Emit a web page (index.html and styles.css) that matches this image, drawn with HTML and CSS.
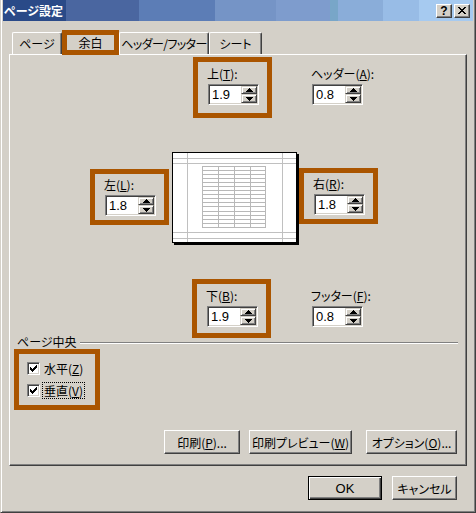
FILE: index.html
```html
<!DOCTYPE html>
<html lang="ja">
<head>
<meta charset="utf-8">
<title>ページ設定</title>
<link rel="stylesheet" href="styles.css">
</head>
<body>
<div class="window">
  <div class="titlebar">
    <span class="title">ページ設定</span>
    <div class="capbtns">
      <span class="capbtn help">?</span>
      <span class="capbtn close"><svg width="8" height="7" viewBox="0 0 8 7"><g fill="#000"><rect x="0" y="0" width="2" height="1"/><rect x="6" y="0" width="2" height="1"/><rect x="1" y="1" width="2" height="1"/><rect x="5" y="1" width="2" height="1"/><rect x="2" y="2" width="4" height="1"/><rect x="3" y="3" width="2" height="1"/><rect x="2" y="4" width="4" height="1"/><rect x="1" y="5" width="2" height="1"/><rect x="5" y="5" width="2" height="1"/><rect x="0" y="6" width="2" height="1"/><rect x="6" y="6" width="2" height="1"/></g></svg></span>
    </div>
  </div>
  <div class="main">
    <div class="tabs">
      <div class="tab t1">ページ</div>
      <div class="tab active">余白</div>
      <div class="tab t3">ヘッダー/フッター</div>
      <div class="tab t4">シート</div>
    </div>
    <div class="panel">
      <div class="row row-top">
        <div class="field hl">
          <div class="lbl">上(<u>T</u>):</div>
          <div class="spin"><span class="val">1.9</span><div class="arrows"><span class="sb up"><svg width="7" height="4" viewBox="0 0 7 4"><g fill="#000"><rect x="3" y="0" width="1" height="1"/><rect x="2" y="1" width="3" height="1"/><rect x="1" y="2" width="5" height="1"/><rect x="0" y="3" width="7" height="1"/></g></svg></span><span class="sb dn"><svg width="7" height="4" viewBox="0 0 7 4"><g fill="#000"><rect x="0" y="0" width="7" height="1"/><rect x="1" y="1" width="5" height="1"/><rect x="2" y="2" width="3" height="1"/><rect x="3" y="3" width="1" height="1"/></g></svg></span></div></div>
        </div>
        <div class="field side">
          <div class="lbl">ヘッダー(<u>A</u>):</div>
          <div class="spin"><span class="val">0.8</span><div class="arrows"><span class="sb up"><svg width="7" height="4" viewBox="0 0 7 4"><g fill="#000"><rect x="3" y="0" width="1" height="1"/><rect x="2" y="1" width="3" height="1"/><rect x="1" y="2" width="5" height="1"/><rect x="0" y="3" width="7" height="1"/></g></svg></span><span class="sb dn"><svg width="7" height="4" viewBox="0 0 7 4"><g fill="#000"><rect x="0" y="0" width="7" height="1"/><rect x="1" y="1" width="5" height="1"/><rect x="2" y="2" width="3" height="1"/><rect x="3" y="3" width="1" height="1"/></g></svg></span></div></div>
        </div>
      </div>

      <div class="row row-mid">
        <div class="field hl mid left">
          <div class="lbl">左(<u>L</u>):</div>
          <div class="spin"><span class="val">1.8</span><div class="arrows"><span class="sb up"><svg width="7" height="4" viewBox="0 0 7 4"><g fill="#000"><rect x="3" y="0" width="1" height="1"/><rect x="2" y="1" width="3" height="1"/><rect x="1" y="2" width="5" height="1"/><rect x="0" y="3" width="7" height="1"/></g></svg></span><span class="sb dn"><svg width="7" height="4" viewBox="0 0 7 4"><g fill="#000"><rect x="0" y="0" width="7" height="1"/><rect x="1" y="1" width="5" height="1"/><rect x="2" y="2" width="3" height="1"/><rect x="3" y="3" width="1" height="1"/></g></svg></span></div></div>
        </div>
        <div class="preview">
          <svg width="125" height="91" viewBox="0 0 125 91">
            <rect x="0.5" y="0.5" width="124" height="90" fill="#fff" stroke="#000"/>
            <g stroke="#c0c0c0" stroke-width="1">
              <line x1="15.5" y1="1" x2="15.5" y2="90"/>
              <line x1="110.5" y1="1" x2="110.5" y2="90"/>
              <line x1="1" y1="6.5" x2="124" y2="6.5"/>
              <line x1="1" y1="11.5" x2="124" y2="11.5"/>
              <line x1="1" y1="80.5" x2="124" y2="80.5"/>
              <line x1="1" y1="86.5" x2="124" y2="86.5"/>
            </g>
            <g stroke="#b8b8b8" stroke-width="1">
              <rect x="30.5" y="14.5" width="63" height="61" fill="none"/>
              <line x1="46.5" y1="14.5" x2="46.5" y2="75.5"/>
              <line x1="62.5" y1="14.5" x2="62.5" y2="75.5"/>
              <line x1="78.5" y1="14.5" x2="78.5" y2="75.5"/>
              <line x1="30.5" y1="18.5" x2="93.5" y2="18.5"/>
              <line x1="30.5" y1="22.5" x2="93.5" y2="22.5"/>
              <line x1="30.5" y1="26.5" x2="93.5" y2="26.5"/>
              <line x1="30.5" y1="30.5" x2="93.5" y2="30.5"/>
              <line x1="30.5" y1="34.5" x2="93.5" y2="34.5"/>
              <line x1="30.5" y1="38.5" x2="93.5" y2="38.5"/>
              <line x1="30.5" y1="42.5" x2="93.5" y2="42.5"/>
              <line x1="30.5" y1="46.5" x2="93.5" y2="46.5"/>
              <line x1="30.5" y1="50.5" x2="93.5" y2="50.5"/>
              <line x1="30.5" y1="54.5" x2="93.5" y2="54.5"/>
              <line x1="30.5" y1="59.5" x2="93.5" y2="59.5"/>
              <line x1="30.5" y1="63.5" x2="93.5" y2="63.5"/>
              <line x1="30.5" y1="67.5" x2="93.5" y2="67.5"/>
              <line x1="30.5" y1="71.5" x2="93.5" y2="71.5"/>
            </g>
          </svg>
        </div>
        <div class="field hl mid right">
          <div class="lbl">右(<u>R</u>):</div>
          <div class="spin"><span class="val">1.8</span><div class="arrows"><span class="sb up"><svg width="7" height="4" viewBox="0 0 7 4"><g fill="#000"><rect x="3" y="0" width="1" height="1"/><rect x="2" y="1" width="3" height="1"/><rect x="1" y="2" width="5" height="1"/><rect x="0" y="3" width="7" height="1"/></g></svg></span><span class="sb dn"><svg width="7" height="4" viewBox="0 0 7 4"><g fill="#000"><rect x="0" y="0" width="7" height="1"/><rect x="1" y="1" width="5" height="1"/><rect x="2" y="2" width="3" height="1"/><rect x="3" y="3" width="1" height="1"/></g></svg></span></div></div>
        </div>
      </div>

      <div class="row row-bot">
        <div class="field hl bot">
          <div class="lbl">下(<u>B</u>):</div>
          <div class="spin"><span class="val">1.9</span><div class="arrows"><span class="sb up"><svg width="7" height="4" viewBox="0 0 7 4"><g fill="#000"><rect x="3" y="0" width="1" height="1"/><rect x="2" y="1" width="3" height="1"/><rect x="1" y="2" width="5" height="1"/><rect x="0" y="3" width="7" height="1"/></g></svg></span><span class="sb dn"><svg width="7" height="4" viewBox="0 0 7 4"><g fill="#000"><rect x="0" y="0" width="7" height="1"/><rect x="1" y="1" width="5" height="1"/><rect x="2" y="2" width="3" height="1"/><rect x="3" y="3" width="1" height="1"/></g></svg></span></div></div>
        </div>
        <div class="field side bot">
          <div class="lbl">フッター(<u>F</u>):</div>
          <div class="spin"><span class="val">0.8</span><div class="arrows"><span class="sb up"><svg width="7" height="4" viewBox="0 0 7 4"><g fill="#000"><rect x="3" y="0" width="1" height="1"/><rect x="2" y="1" width="3" height="1"/><rect x="1" y="2" width="5" height="1"/><rect x="0" y="3" width="7" height="1"/></g></svg></span><span class="sb dn"><svg width="7" height="4" viewBox="0 0 7 4"><g fill="#000"><rect x="0" y="0" width="7" height="1"/><rect x="1" y="1" width="5" height="1"/><rect x="2" y="2" width="3" height="1"/><rect x="3" y="3" width="1" height="1"/></g></svg></span></div></div>
        </div>
      </div>

      <div class="group-head">
        <span class="group-label">ページ中央</span>
        <span class="etch"></span>
      </div>
      <div class="checks">
        <div class="chk">
          <span class="cb"><svg width="7" height="7" viewBox="0 0 7 7"><g fill="#000"><rect x="0" y="2" width="1" height="3"/><rect x="1" y="3" width="1" height="3"/><rect x="2" y="4" width="1" height="3"/><rect x="3" y="3" width="1" height="3"/><rect x="4" y="2" width="1" height="3"/><rect x="5" y="1" width="1" height="3"/><rect x="6" y="0" width="1" height="3"/></g></svg></span>
          <span class="chk-text">水平(<u>Z</u>)</span>
        </div>
        <div class="chk">
          <span class="cb"><svg width="7" height="7" viewBox="0 0 7 7"><g fill="#000"><rect x="0" y="2" width="1" height="3"/><rect x="1" y="3" width="1" height="3"/><rect x="2" y="4" width="1" height="3"/><rect x="3" y="3" width="1" height="3"/><rect x="4" y="2" width="1" height="3"/><rect x="5" y="1" width="1" height="3"/><rect x="6" y="0" width="1" height="3"/></g></svg></span>
          <span class="chk-text focus">垂直(<u>V</u>)</span>
        </div>
      </div>

      <div class="btnrow">
        <span class="btn b-print">印刷(<u>P</u>)...</span>
        <span class="btn b-prev">印刷プレビュー(<u>W</u>)</span>
        <span class="btn b-opt">オプション(<u>O</u>)...</span>
      </div>
    </div>
    <div class="footer">
      <span class="btn b-ok">OK</span>
      <span class="btn b-cancel">キャンセル</span>
    </div>
  </div>
</div>
</body>
</html>
```

FILE: styles.css
```css
* { box-sizing: border-box; }
html, body {
  margin: 0;
  padding: 0;
  background: #d4d0c8;
}
body {
  font-family: "Noto Sans CJK JP", "Liberation Sans", sans-serif;
  font-size: 12px;
  color: #000;
  font-feature-settings: "palt";
}
u { text-decoration: underline; text-underline-offset: 1px; }

.window {
  width: 476px;
  height: 513px;
  background: #d4d0c8;
  border-style: solid;
  border-width: 0 1px 1px 1px;
  border-color: #d4d0c8 #404040 #404040 #d4d0c8;
  box-shadow: inset 1px 0 #fff, inset -1px -1px #808080;
  padding: 0 2px 0 2px;
  overflow: hidden;
}

.titlebar {
  height: 21px;
  display: flex;
  align-items: center;
  justify-content: space-between;
  padding-left: 1px;
  background: linear-gradient(to right,
    #2a4a88 0, #2a4a88 63px,
    #4a66a0 63px, #4a66a0 136px,
    #5c7db6 136px, #5c7db6 212px,
    #7594c6 212px, #7594c6 273px,
    #7e9ccd 273px, #7e9ccd 327px,
    #78a6c8 327px, #78a6c8 335px,
    #8aadd9 335px, #8aadd9 380px,
    #98bce6 380px, #98bce6 416px,
    #a6caf0 416px, #a6caf0 100%);
}
.title {
  color: #fff;
  font-weight: bold;
  font-size: 12px;
  line-height: 14px;
}
.capbtns {
  display: flex;
  gap: 2px;
  margin-right: 3px;
}
.capbtn {
  width: 16px;
  height: 14px;
  background: #d4d0c8;
  border: 1px solid;
  border-color: #fff #404040 #404040 #fff;
  box-shadow: inset -1px -1px #808080;
  display: flex;
  align-items: center;
  justify-content: center;
}
.capbtn.help {
  font-family: "Liberation Sans", sans-serif;
  font-weight: bold;
  font-size: 12px;
  line-height: 12px;
}

.main {
  padding: 0 6px;
}

.tabs {
  margin-top: 9px;
  height: 24px;
  padding-left: 3px;
  display: flex;
  align-items: flex-end;
}
.tab {
  height: 22px;
  border: 1px solid;
  border-bottom: none;
  border-color: #fff #404040 transparent #fff;
  box-shadow: inset -1px 0 #808080;
  border-radius: 2px 2px 0 0;
  display: flex;
  align-items: center;
  justify-content: center;
  white-space: nowrap;
}
.tab.t1 { width: 50px; }
.tab.t3 { width: 90px; letter-spacing: -0.6px; }
.tab.t4 { width: 53px; }
.tab.active {
  width: 57px;
  height: 25px;
  margin-bottom: -1px;
  border: 5px solid #aa5500;
  border-radius: 0;
  box-shadow: none;
  background: #d4d0c8;
  position: relative;
  z-index: 1;
}

.panel {
  height: 412px;
  border: 1px solid;
  border-color: #fff #404040 #404040 #fff;
  box-shadow: inset -1px -1px #808080;
}

.row { display: flex; align-items: flex-start; }
.row-top { margin-top: 2px; padding-left: 183px; }
.row-mid { margin-top: 34px; padding-left: 80px; }
.row-bot { margin-top: 36px; padding-left: 182px; }

.field {
  width: 79px;
  border: 5px solid transparent;
  padding: 4px 8px 8px 10px;
}
.field.hl { border-color: #aa5500; }
.field.side { margin-left: 25px; }
.row-bot .field.side { margin-left: 26px; }
.field.bot { padding-bottom: 6px; }
.field.mid { padding-top: 3px; padding-bottom: 4px; }
.field.left { margin-top: 17px; }
.field.right { margin-top: 16px; margin-left: 2px; }
.lbl {
  height: 16px;
  line-height: 16px;
  margin-bottom: 2px;
  white-space: nowrap;
  margin-left: -1px;
}

.spin {
  width: 51px;
  height: 21px;
  background: #fff;
  border: 1px solid;
  border-color: #808080 #fff #fff #808080;
  box-shadow: inset 1px 1px #404040, inset -1px -1px #d4d0c8;
  padding: 1px;
  display: flex;
}
.val {
  flex: 1;
  font-family: "Liberation Sans", sans-serif;
  font-size: 13px;
  line-height: 17px;
  padding-left: 2px;
}
.arrows {
  width: 16px;
  display: flex;
  flex-direction: column;
}
.sb {
  background: #d4d0c8;
  border: 1px solid;
  border-color: #d4d0c8 #404040 #404040 #d4d0c8;
  box-shadow: inset 1px 1px #fff, inset -1px -1px #808080;
  display: flex;
  align-items: center;
  justify-content: center;
}
.sb.up { height: 8px; }
.sb.dn { height: 9px; }
.sb svg { display: block; }

.preview {
  width: 125px;
  height: 91px;
  margin-left: 3px;
  box-shadow: 2px 2px 0 #000;
}
.preview svg { display: block; }

.group-head {
  margin-top: -3px;
  height: 14px;
  padding-left: 7px;
  display: flex;
  align-items: center;
}
.group-label { line-height: 14px; white-space: nowrap; }
.etch {
  flex: 1;
  height: 2px;
  margin: 1px 8px 0 3px;
  border-top: 1px solid #808080;
  border-bottom: 1px solid #fff;
}

.checks {
  width: 86px;
  margin-left: 4px;
  border: 5px solid #aa5500;
  padding: 3px 0 4px 8px;
}
.chk {
  height: 22px;
  display: flex;
  align-items: center;
}
.cb {
  width: 13px;
  height: 13px;
  background: #fff;
  border: 1px solid;
  border-color: #808080 #fff #fff #808080;
  box-shadow: inset 1px 1px #404040, inset -1px -1px #d4d0c8;
  display: flex;
  align-items: center;
  justify-content: center;
}
.cb svg { display: block; }
.chk-text {
  margin-left: 2px;
  padding: 0 1px;
  border: 1px dotted transparent;
  line-height: 15px;
  white-space: nowrap;
}
.chk-text.focus { border-color: #000; }

.btnrow {
  margin-top: 20px;
  display: flex;
  justify-content: flex-end;
  padding-right: 9px;
}
.btn {
  height: 24px;
  border: 1px solid;
  border-color: #fff #404040 #404040 #fff;
  box-shadow: inset -1px -1px #808080;
  display: flex;
  align-items: center;
  justify-content: center;
  white-space: nowrap;
  background: #d4d0c8;
}
.b-print { width: 76px; }
.b-prev { width: 103px; margin-left: 9px; }
.b-opt { width: 91px; margin-left: 14px; }

.footer {
  margin-top: 10px;
  display: flex;
  justify-content: flex-end;
  padding-right: 10px;
}
.b-ok {
  width: 74px;
  border-color: #000;
  box-shadow: inset 1px 1px #fff, inset -1px -1px #404040, inset -2px -2px #808080;
  font-family: "Liberation Sans", sans-serif;
  font-size: 13px;
}
.b-cancel { width: 65px; margin-left: 10px; }
```
